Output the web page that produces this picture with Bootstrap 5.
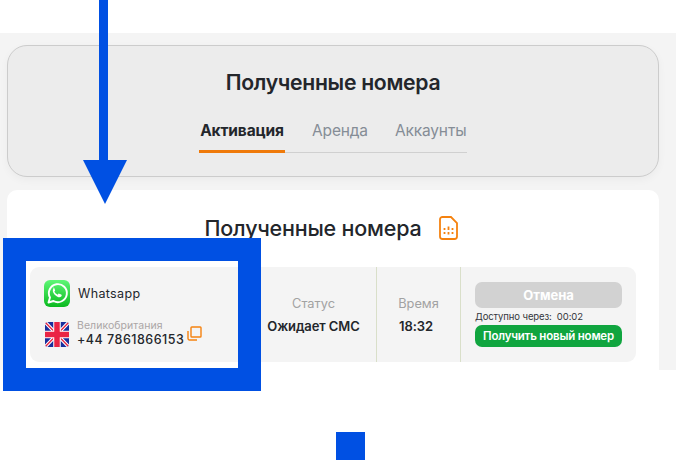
<!doctype html>
<html lang="ru">
<head>
<meta charset="utf-8">
<title>Полученные номера</title>
<link href="https://cdn.jsdelivr.net/npm/bootstrap@5.3.0/dist/css/bootstrap.min.css" rel="stylesheet">
<style>
html,body{height:460px;overflow:hidden}
body{font-family:Inter,"Noto Sans",sans-serif;background:#fff;color:#23262b;position:relative}
.band{margin-top:33px;height:337px;background:#f4f4f4;padding:12px 17px 0 7px}
.head-box{height:132px;background:#ececec;border:1px solid #ccc;border-radius:20px;padding-top:21px;box-shadow:0 3px 8px rgba(0,0,0,.04)}
.ttl{font-size:21.2px;font-weight:600;line-height:30px;letter-spacing:-.3px;margin:0}
.tabs-line{width:268px;margin:23px auto 0;border-bottom:1px solid #d0d0d0;gap:27px;height:33px}
.tab-item{font-size:15.5px;line-height:22px;color:#858d96;padding:0;height:33px;letter-spacing:-.15px;white-space:nowrap}
.tab-item.on{color:#23262b;font-weight:700;border-bottom:3px solid #ef7a0a;width:86px}
.white-box{height:180px;margin-top:13px;background:#fff;border-radius:10px 10px 0 0;padding:23px 23px 0}
.ttl2{font-size:21.5px;font-weight:500;line-height:30px;letter-spacing:-.2px;gap:18px;margin:0 3px 24px 0}
.rowbox{height:95px;background:#f4f4f4;border-radius:9px}
.c1{width:221px;padding:13px 0 0 14px}
.c2{width:126px;border-right:1px solid #d9dfc9}
.c3{width:84px;border-right:1px solid #d9dfc9}
.c4{width:175px;padding:15px 14px 0 14px}
.lbl{font-size:12.8px;color:#a2a2a2;line-height:18px;margin-bottom:4px}
.val{font-size:13px;font-weight:600;line-height:18px;letter-spacing:-.1px}
.val-t{margin-right:5px}
.nm{font-size:12.5px;letter-spacing:.35px;margin-left:8px;padding-top:2px}
.flagline{margin-top:13px}
.flag{margin:2px 8px 0 1px}
.cn{font-size:10.5px;color:#aba6a6;line-height:12px;letter-spacing:.05px}
.ph{font-size:12.5px;font-weight:500;line-height:16px;letter-spacing:.5px;white-space:nowrap}
.copy{margin:-6px 0 0 3px}
.btn-off{display:block;width:100%;height:26px;padding:0;background:#d2d2d2;border:0;border-radius:7px;color:#fff;font-weight:700;font-size:13px;line-height:26px}
.wait{font-size:9.5px;line-height:12px;margin:3px 0 2px;height:12px;color:#33363b;white-space:nowrap;letter-spacing:-.1px}
.btn-new{display:block;width:100%;height:22px;padding:0;background:#10a53f;border:0;border-radius:7px;color:#fff;font-weight:600;font-size:11.5px;line-height:22px;white-space:nowrap;letter-spacing:-.2px}
.frame{position:absolute;left:3px;top:238px;width:258px;height:153px;border:23px solid #0050e3}
.shaft{position:absolute;left:99px;top:0;width:9px;height:161px;background:#0050e3}
.tip{position:absolute;left:83px;top:160px;width:44px;height:44px;background:#0050e3;clip-path:polygon(0 0,100% 0,50% 100%)}
.sq{position:absolute;left:336px;top:432px;width:29px;height:28px;background:#0050e3}
</style>
</head>
<body>
<div class="band">
  <div class="head-box text-center">
    <h1 class="ttl">Полученные номера</h1>
    <div class="d-flex tabs-line">
      <div class="tab-item on">Активация</div>
      <div class="tab-item">Аренда</div>
      <div class="tab-item">Аккаунты</div>
    </div>
  </div>
  <div class="white-box">
    <h2 class="ttl2 d-flex justify-content-center align-items-center">
      <span>Полученные номера</span>
      <svg width="19" height="24" viewBox="0 0 19 24" fill="none"><path d="M3.500 1h8.500l6 6v13.500a2.500 2.500 0 0 1-2.500 2.500h-12a2.500 2.500 0 0 1-2.500-2.500v-17a2.500 2.500 0 0 1 2.500-2.500z" stroke="#f5820f" stroke-width="1.800"/><path d="M5.500 12v2M9.500 10.500v3.500M13.500 12v2M5.500 16v2M9.500 16v2.500M13.500 16v2" stroke="#f5820f" stroke-width="1.800"/></svg>
    </h2>
    <div class="rowbox d-flex">
      <div class="c1">
        <div class="d-flex align-items-center">
          <svg width="26" height="27" viewBox="0 0 26 27"><defs><linearGradient id="wg" x1="0" y1="0" x2="0" y2="1"><stop offset="0" stop-color="#5ff777"/><stop offset="1" stop-color="#0ab91f"/></linearGradient></defs><rect width="26" height="27" rx="6" fill="url(#wg)"/><path d="M4.500 22.500l1.500-5a9 9 0 1 1 3.500 3.500z" fill="none" stroke="#fff" stroke-width="1.900" stroke-linejoin="round"/><path d="M9.800 8.500c-1.200 1-1.300 2.700-.3 4.500 1.100 2 3 3.600 5 4.200 1.500.4 2.900-.3 3.200-1.600.1-.5-.1-.8-.5-1l-2-.9c-.4-.2-.7-.1-.9.200l-.6.800c-1.400-.5-2.700-1.700-3.400-3.100l.6-.7c.2-.3.3-.5.100-.9l-.8-1.900c-.2-.5-.9-.6-1.400-.1z" fill="#fff"/></svg>
          <span class="nm">Whatsapp</span>
        </div>
        <div class="d-flex flagline">
          <svg class="flex-shrink-0 flag" width="24" height="25" viewBox="0 0 24 25"><defs><clipPath id="fc"><rect width="24" height="25" rx="3"/></clipPath></defs><g clip-path="url(#fc)"><rect width="24" height="25" fill="#1a2e9c"/><path d="M0 0L24 25M24 0L0 25" stroke="#fff" stroke-width="3.500"/><path d="M0 0L24 25M24 0L0 25" stroke="#e8213f" stroke-width="1.300"/><path d="M12 0V25M0 12.500H24" stroke="#fff" stroke-width="7.500"/><path d="M12 0V25M0 12.500H24" stroke="#ea2444" stroke-width="5.500"/></g></svg>
          <div>
            <div class="cn">Великобритания</div>
            <div class="ph d-flex">+44 7861866153<svg class="copy" width="15" height="15" viewBox="0 0 15 15" fill="none"><rect x="4" y="1" width="10" height="10" rx=".8" stroke="#f5820f" stroke-width="1.400"/><path d="M1 5v7.500a1.500 1.500 0 0 0 1.500 1.500H10" stroke="#f5820f" stroke-width="1.400"/></svg></div>
          </div>
        </div>
      </div>
      <div class="c2 d-flex flex-column justify-content-center align-items-center">
        <div class="lbl">Статус</div>
        <div class="val">Ожидает СМС</div>
      </div>
      <div class="c3 d-flex flex-column justify-content-center align-items-center">
        <div class="lbl">Время</div>
        <div class="val val-t">18:32</div>
      </div>
      <div class="c4">
        <button type="button" class="btn-off">Отмена</button>
        <div class="wait">Доступно через:&nbsp; 00:02</div>
        <button type="button" class="btn-new">Получить новый номер</button>
      </div>
    </div>
  </div>
</div>
<div class="frame"></div>
<div class="shaft"></div>
<div class="tip"></div>
<div class="sq"></div>
<script src="https://cdn.jsdelivr.net/npm/bootstrap@5.3.0/dist/js/bootstrap.bundle.min.js"></script>
</body>
</html>
